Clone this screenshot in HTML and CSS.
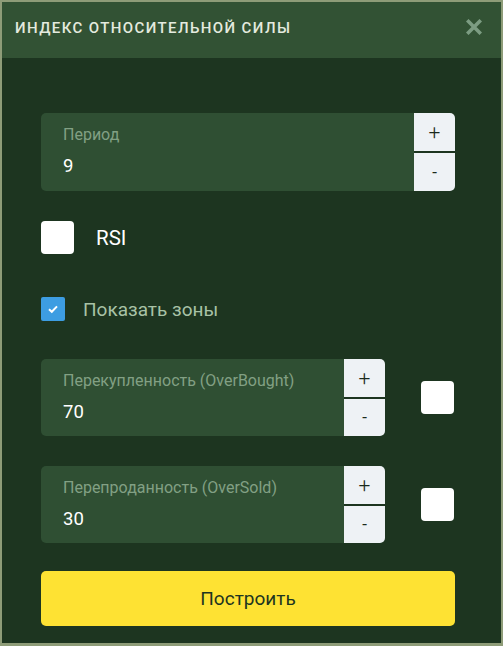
FILE: index.html
```html
<!DOCTYPE html>
<html lang="ru">
<head>
  <meta charset="UTF-8" />
  <title>Индекс относительной силы</title>
  <link rel="stylesheet" href="styles.css">
</head>
<body>
  <div class="dialog">
    <div class="dialog-head">
      <span class="dialog-title">Индекс относительной силы</span>
      <svg class="dialog-close" width="16" height="16" viewBox="0 0 16 16"><path d="M2.5 2.5 L13.5 13.5 M13.5 2.5 L2.5 13.5" stroke="#7c9c82" stroke-width="3.6" stroke-linecap="square"/></svg>
    </div>

    <div class="dialog-body">
      <!-- Период -->
      <div class="field field-wide">
        <div class="field-main">
          <div class="field-label">Период</div>
          <div class="field-value">9</div>
        </div>
        <div class="field-btns">
          <button class="step step-plus">+</button>
          <button class="step step-minus">-</button>
        </div>
      </div>

      <label class="check-row check-rsi">
        <span class="box box-big"></span>
        <span class="check-text">RSI</span>
      </label>

      <label class="check-row check-zones">
        <span class="box box-small checked">
          <svg width="12" height="10" viewBox="0 0 12 10"><path d="M2 5.2 L4.8 7.8 L10 2.4" fill="none" stroke="#fff" stroke-width="2"/></svg>
        </span>
        <span class="check-text">Показать зоны</span>
      </label>

      <!-- Зоны -->
      <div class="zone-row">
        <div class="field field-zone">
          <div class="field-main">
            <div class="field-label">Перекупленность (OverBought)</div>
            <div class="field-value">70</div>
          </div>
          <div class="field-btns">
            <button class="step step-plus">+</button>
            <button class="step step-minus">-</button>
          </div>
        </div>
        <span class="box box-big"></span>
      </div>

      <div class="zone-row">
        <div class="field field-zone">
          <div class="field-main">
            <div class="field-label">Перепроданность (OverSold)</div>
            <div class="field-value">30</div>
          </div>
          <div class="field-btns">
            <button class="step step-plus">+</button>
            <button class="step step-minus">-</button>
          </div>
        </div>
        <span class="box box-big"></span>
      </div>

      <button class="build">Построить</button>
    </div>
  </div>
</body>
</html>
```

FILE: styles.css
```css
html, body {
  margin: 0;
  padding: 0;
  background: #1d3520;
}
body {
  font-family: Roboto, "Liberation Sans", Arial, sans-serif;
  width: 503px;
  height: 646px;
}
.dialog {
  box-sizing: border-box;
  width: 503px;
  height: 646px;
  border: 2px solid #8e9c78;
  border-bottom-width: 3px;
  background: #1d3520;
  display: flex;
  flex-direction: column;
}
.dialog-head {
  height: 56px;
  background: #325234;
  display: flex;
  align-items: center;
  justify-content: space-between;
  padding: 0 19px 0 13px;
  flex-shrink: 0;
}
.dialog-title {
  text-transform: uppercase;
  color: #e4eadf;
  font-size: 15px;
  font-weight: 500;
  letter-spacing: 1.4px;
  margin-top: -4px;
}
.dialog-close {
  margin-top: -6px;
}
.dialog-body {
  padding: 55px 46px 0 39px;
  display: flex;
  flex-direction: column;
}
.field {
  display: flex;
  height: 78px;
  border-radius: 5px;
  overflow: hidden;
}
.field-wide {
  width: 414px;
}
.field-zone {
  width: 344px;
  height: 77px;
}
.field-main {
  flex: 1;
  background: #2f4f33;
  padding: 12px 0 0 22px;
}
.field-label {
  color: #82a084;
  font-size: 16px;
  line-height: 19px;
}
.field-value {
  color: #ffffff;
  font-size: 18.5px;
  margin-top: 11px;
  line-height: 22px;
}
.field-btns {
  width: 41px;
  display: flex;
  flex-direction: column;
  gap: 2px;
  background: #1d3520;
}
.step {
  flex: 1;
  border: none;
  background: #eef2f5;
  font-family: inherit;
  color: #1a2a1c;
  padding: 0;
  margin: 0;
}
.step-plus {
  font-size: 21px;
  font-weight: 300;
}
.step-minus {
  font-size: 17px;
}
.check-row {
  display: flex;
  align-items: center;
}
.check-rsi {
  margin-top: 30px;
}
.check-zones {
  margin-top: 43px;
}
.box {
  display: inline-flex;
  align-items: center;
  justify-content: center;
  background: #ffffff;
  border-radius: 4px;
  flex-shrink: 0;
}
.box-big {
  width: 33px;
  height: 33px;
}
.box-small {
  width: 24px;
  height: 24px;
  border-radius: 2px;
}
.box.checked {
  background: #3d9de2;
}
.check-rsi .check-text {
  color: #ffffff;
  font-size: 20.5px;
  margin-left: 22px;
}
.check-zones .check-text {
  color: #a8c2a6;
  font-size: 19px;
  margin-left: 18px;
}
.zone-row {
  display: flex;
  align-items: center;
  gap: 36px;
  margin-top: 38px;
}
.zone-row + .zone-row {
  margin-top: 30px;
}
.build {
  margin-top: 28px;
  width: 414px;
  height: 55px;
  border: none;
  border-radius: 5px;
  background: #fee233;
  color: #1d3520;
  font-family: inherit;
  font-size: 19px;
}
```
